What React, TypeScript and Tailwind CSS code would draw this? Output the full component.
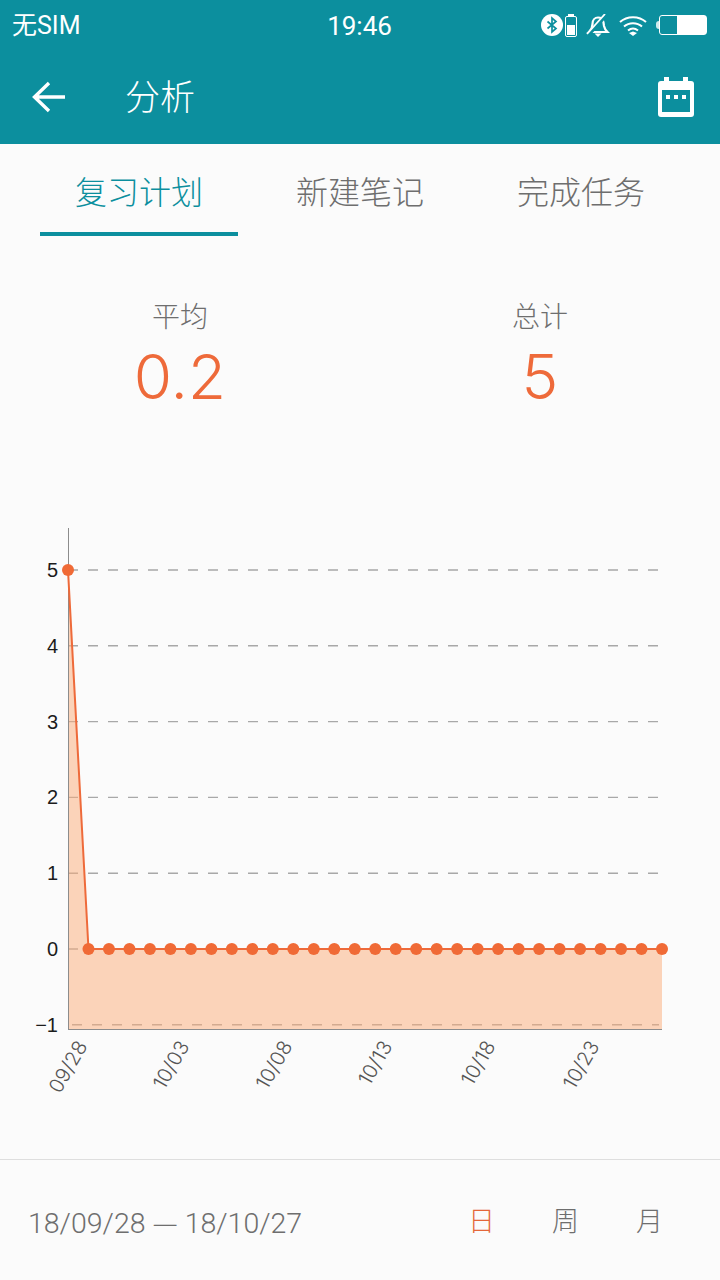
import React from 'react';

const POINT_COUNT = 30;
const xAt = (i: number) => 68 + (i * 594) / (POINT_COUNT - 1);
const yAt = (v: number) => 50 + (5 - v) * 75.8;

const yTicks = [5, 4, 3, 2, 1, 0, -1];
const xTicks = [
    { label: '09/28', x: 88 },
    { label: '10/03', x: 190 },
    { label: '10/08', x: 293 },
    { label: '10/13', x: 393 },
    { label: '10/18', x: 496 },
    { label: '10/23', x: 600 },
];

const StatusIcons = () => (
    <div className="flex items-center">
        {/* bluetooth */}
        <svg width="22" height="22" viewBox="0 0 22 22" className="mr-[2px]">
            <circle cx="11" cy="11" r="11" fill="#fff" />
            <path d="M6.5 7.5 L15 14.5 L11 18 L11 4 L15 7.5 L6.5 14.5" fill="none" stroke="#0c8f9e" strokeWidth="1.7" />
        </svg>
        {/* small battery */}
        <svg width="12" height="23" viewBox="0 0 12 23" className="mr-[9px]">
            <rect x="0.5" y="2.5" width="11" height="20" rx="1.5" fill="none" stroke="#fff" strokeWidth="1" />
            <rect x="3" y="0" width="6" height="2.5" fill="#fff" />
            <rect x="2" y="11" width="8" height="10" fill="#fff" />
        </svg>
        {/* muted bell */}
        <svg width="24" height="23" viewBox="0 0 24 23" className="mr-[9px]">
            <path d="M3 18 C6 15 6.5 13 6.5 10 C6.5 6 9 3.5 12 3.5 C15 3.5 17 5.5 17.5 8.5 L18 12 C18.5 14.5 20 16.5 21.5 18 Z" fill="none" stroke="#fff" strokeWidth="2.2" />
            <path d="M8.5 19.5 H15.5 L12 23 Z" fill="#fff" />
            <path d="M3 20 L21 0" stroke="#0c8f9e" strokeWidth="4" />
            <path d="M1 20 L19 0" stroke="#fff" strokeWidth="1.8" />
        </svg>
        {/* wifi */}
        <svg width="28" height="21" viewBox="0 0 28 21" className="mr-[9px]">
            <path d="M1 7 C8 0.5 20 0.5 27 7" fill="none" stroke="#fff" strokeWidth="2" />
            <path d="M5 11.5 C10 7 18 7 23 11.5" fill="none" stroke="#fff" strokeWidth="2" />
            <path d="M9 15.5 C12 13 16 13 19 15.5" fill="none" stroke="#fff" strokeWidth="2" />
            <path d="M10 18 L14 16.5 L18 18 L14 21 Z" fill="#fff" />
        </svg>
        {/* battery */}
        <div className="flex items-center">
            <div className="w-[3px] h-[8px] bg-white rounded-l-sm opacity-80" />
            <div className="w-[48px] h-[20px] border border-white rounded-[3px] flex justify-end">
                <div className="w-[29px] h-full bg-white" />
            </div>
        </div>
    </div>
);

const Chart = () => {
    const pts = Array.from({ length: POINT_COUNT }, (_, i) => ({ x: xAt(i), y: yAt(i === 0 ? 5 : 0) }));
    const line = pts.map(p => `${p.x},${p.y}`).join(' ');
    return (
        <svg width="720" height="592" viewBox="0 0 720 592" className="block">
            {yTicks.map(v => (
                <g key={v}>
                    <line
                        x1={v === -1 ? 72 : 68}
                        x2="659"
                        y1={yAt(v)}
                        y2={yAt(v)}
                        stroke="#a8a8a8"
                        strokeWidth="1.4"
                        strokeDasharray="10 10"
                    />
                    <text x="58" y={yAt(v) + 7} textAnchor="end" fontSize="20" fill="#1c1c1c" fontFamily='"Liberation Sans", sans-serif'>
                        {v === -1 ? '−1' : v}
                    </text>
                </g>
            ))}
            <polygon points={`68,${yAt(5)} 88,${yAt(0)} 662,${yAt(0)} 662,509 68,509`} fill="#fbac78" fillOpacity="0.5" />
            <line x1="68.5" x2="68.5" y1="8" y2="509" stroke="#8c8c8c" strokeWidth="1" />
            <line x1="68" x2="662" y1="509.5" y2="509.5" stroke="#8c8c8c" strokeWidth="1" />
            <polyline points={line} fill="none" stroke="#ee6a3a" strokeWidth="2" />
            {pts.map((p, i) => (
                <circle key={i} cx={p.x} cy={p.y} r="6" fill="#f06a36" />
            ))}
            {xTicks.map(t => (
                <text
                    key={t.label}
                    x={t.x}
                    y="526"
                    textAnchor="end"
                    fontSize="20"
                    fontWeight="300"
                    fill="#555555"
                    fontFamily='Inter, sans-serif'
                    transform={`rotate(-60 ${t.x} 526)`}
                >
                    {t.label}
                </text>
            ))}
        </svg>
    );
};

export default function App() {
    return (
        <div className={`w-[720px] h-[1280px] overflow-hidden flex flex-col bg-[#fbfbfb] font-["Roboto","Noto_Sans_CJK_SC",sans-serif]`}>
            {/* Status bar + title */}
            <div className="bg-[#0c8f9e] h-[144px] text-white flex flex-col shrink-0">
                <div className="h-[50px] pl-[12px] pr-[13px] grid grid-cols-[1fr_auto_1fr] items-center">
                    <span className="text-[25px] leading-none pt-[1px]">无SIM</span>
                    <span className="text-[26px] leading-none pt-[1px]">19:46</span>
                    <div className="justify-self-end">
                        <StatusIcons />
                    </div>
                </div>
                <div className="flex items-center h-[94px] pl-[32px] pr-[26px] pb-[1px]">
                    <svg width="34" height="34" viewBox="0 0 34 34" className="mr-[59px]">
                        <path d="M33 17 H3 M17 3 L2.5 17 L17 31" fill="none" stroke="#fff" strokeWidth="3.4" />
                    </svg>
                    <span className="text-[35px] leading-none font-light flex-1 pt-[3px]">分析</span>
                    <svg width="36" height="40" viewBox="0 0 36 40">
                        <rect x="0" y="4" width="36" height="36" rx="3" fill="#fff" />
                        <rect x="6" y="0" width="5" height="8" fill="#fff" />
                        <rect x="25" y="0" width="5" height="8" fill="#fff" />
                        <rect x="4" y="13" width="28" height="22" fill="#0c8f9e" />
                        <rect x="8" y="18" width="4" height="4" fill="#fff" />
                        <rect x="16" y="18" width="4" height="4" fill="#fff" />
                        <rect x="24" y="18" width="4" height="4" fill="#fff" />
                    </svg>
                </div>
            </div>

            {/* Tabs */}
            <div className="grid grid-cols-3 gap-[23px] px-[40px] h-[92px] shrink-0">
                <div className="flex items-center justify-center border-b-4 border-[#0c8f9e] text-[#0c8f9e] text-[32px] font-light pt-[10px]">复习计划</div>
                <div className="flex items-center justify-center text-[#6e6e6e] text-[32px] font-light pt-[6px]">新建笔记</div>
                <div className="flex items-center justify-center text-[#6e6e6e] text-[32px] font-light pt-[6px]">完成任务</div>
            </div>

            {/* Summary */}
            <div className="grid grid-cols-2 pt-[62px] h-[284px] shrink-0">
                <div className="flex flex-col items-center">
                    <span className="text-[28px] leading-[40px] text-[#6e6e6e] font-light">平均</span>
                    <span className="font-['Inter',sans-serif] text-[62px] leading-[78px] text-[#ee6a3a] font-light">0.2</span>
                </div>
                <div className="flex flex-col items-center">
                    <span className="text-[28px] leading-[40px] text-[#6e6e6e] font-light">总计</span>
                    <span className="font-['Inter',sans-serif] text-[62px] leading-[78px] text-[#ee6a3a] font-light">5</span>
                </div>
            </div>

            <Chart />

            <div className="flex-1" />

            {/* Date range footer */}
            <div className="h-[121px] shrink-0 border-t border-[#dedede] flex items-center pl-[28px] text-[#6e6e6e] font-light pt-[5px]">
                <span className="text-[28.5px] flex-1 leading-none">
                    18/09/28 <span className="font-['Noto_Sans_CJK_SC',sans-serif]">—</span> 18/10/27
                </span>
                <div className="flex text-[27px] leading-none mr-[57px] gap-[57px]">
                    <span className="text-[#e4673a]">日</span>
                    <span>周</span>
                    <span>月</span>
                </div>
            </div>
        </div>
    );
}
